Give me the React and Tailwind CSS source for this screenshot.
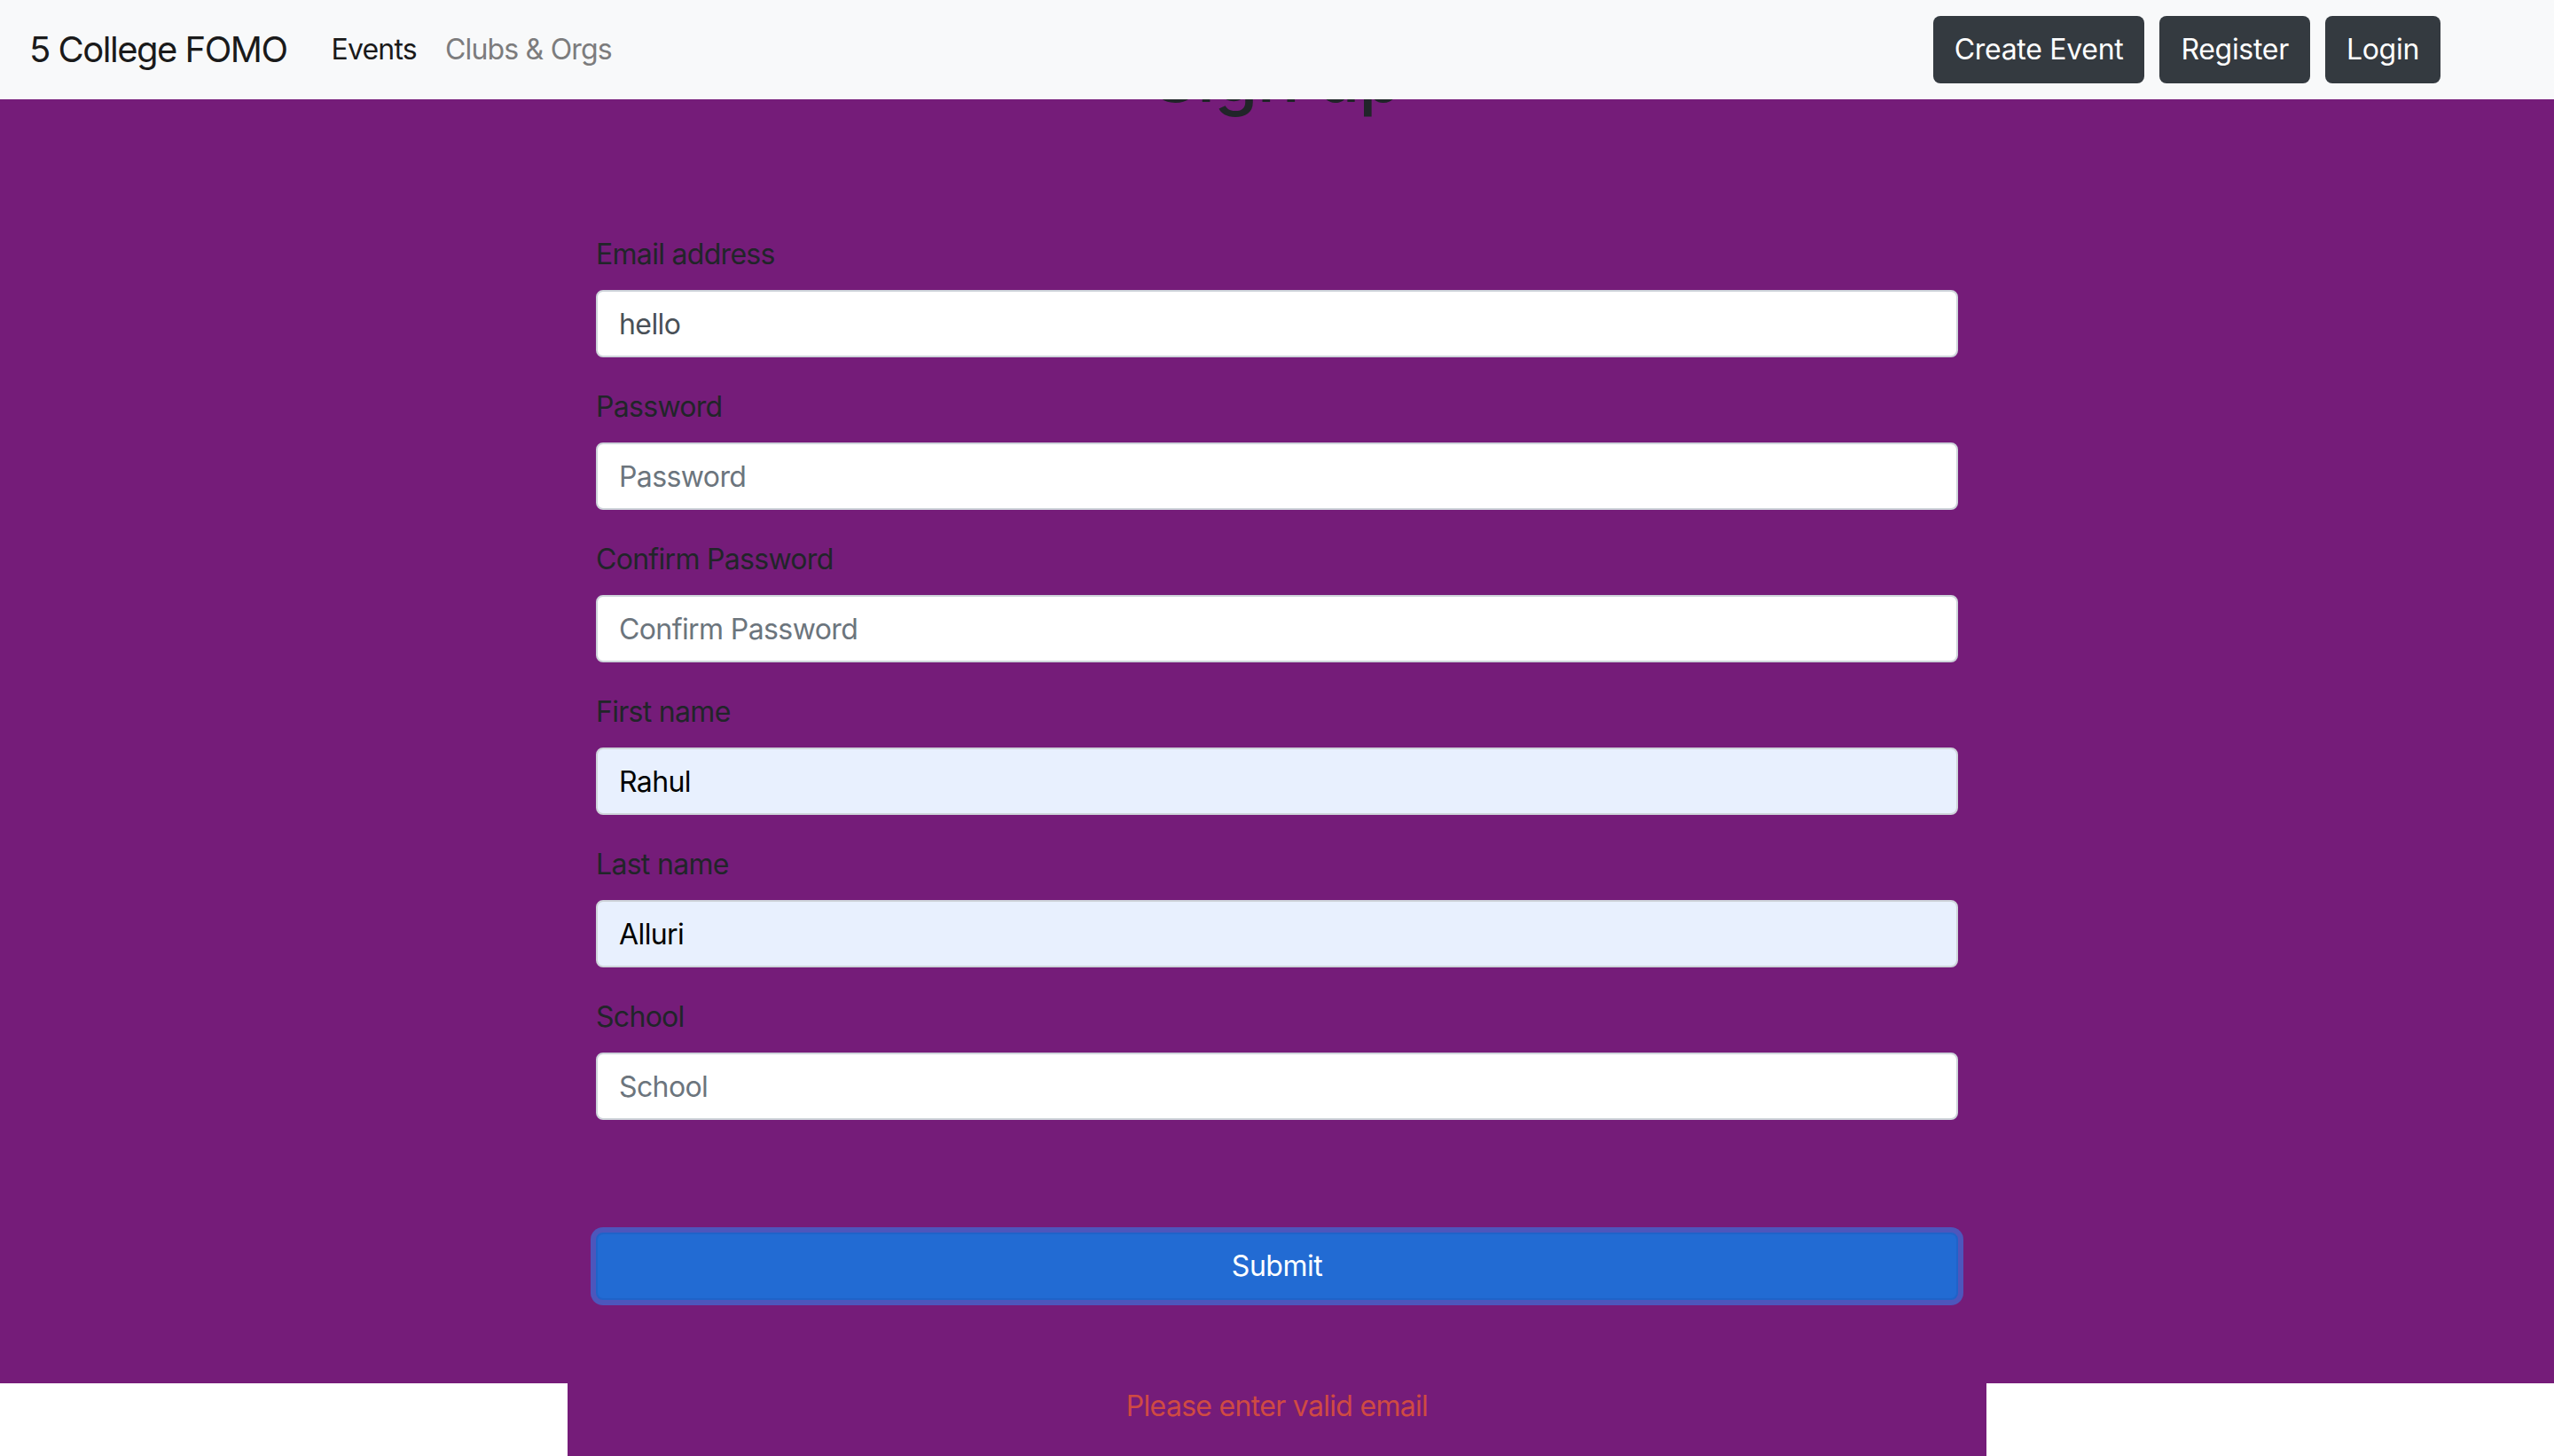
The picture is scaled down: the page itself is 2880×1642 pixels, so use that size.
import React from "react";

const fields = [
  { label: "Email address", value: "hello", placeholder: "Enter email", autofill: false },
  { label: "Password", value: "", placeholder: "Password", autofill: false },
  { label: "Confirm Password", value: "", placeholder: "Confirm Password", autofill: false },
  { label: "First name", value: "Rahul", placeholder: "First name", autofill: true },
  { label: "Last name", value: "Alluri", placeholder: "Last name", autofill: true },
  { label: "School", value: "", placeholder: "School", autofill: false },
];

function Field({ label, value, placeholder, autofill }) {
  return (
    <div className="mb-[32px]">
      <label className="block mb-[16px] text-[32px] leading-[48px] tracking-[-0.7px] text-[#212529]">{label}</label>
      <input
        readOnly
        defaultValue={value}
        placeholder={placeholder}
        className={
          "block w-full h-[76px] px-[24px] rounded-[8px] border-2 border-[#ced4da] text-[32px] leading-[48px] tracking-[-0.6px] outline-none placeholder:text-[#6c757d] " +
          (autofill ? "bg-[#e8f0fe] text-black" : "bg-white text-[#495057]")
        }
      />
    </div>
  );
}

export default function App() {
  return (
    <div className="min-h-screen bg-white font-['Inter','Noto_Sans',sans-serif]">
      <nav className="fixed top-0 inset-x-0 z-10 h-[112px] bg-[#f8f9fa] flex items-center pl-[33px] pr-[128px]">
        <span className="text-[40px] leading-[60px] text-[#1a1a1a] mr-[34px] tracking-[-1.5px]">5 College FOMO</span>
        <a className="px-[16px] text-[32px] leading-[48px] text-[#1a1a1a] tracking-[-0.8px]">Events</a>
        <a className="px-[16px] text-[32px] leading-[48px] text-[#7c7c7d] tracking-[-0.8px]">Clubs &amp; Orgs</a>
        <div className="ml-auto flex items-center gap-[17px]">
          <button className="h-[76px] px-[24px] rounded-[8px] bg-[#343a40] text-white text-[32px] tracking-[-0.3px]">Create Event</button>
          <button className="h-[76px] px-[24px] rounded-[8px] bg-[#343a40] text-white text-[32px] tracking-[-0.3px]">Register</button>
          <button className="h-[76px] px-[24px] rounded-[8px] bg-[#343a40] text-white text-[32px] tracking-[-0.3px]">Login</button>
        </div>
      </nav>

      <main>
        <section className="bg-[#751c79] h-[1560px]">
          <div className="w-[1600px] mx-auto pt-[38px] px-[32px]">
            <h1 className="text-center text-[80px] leading-[96px] font-medium tracking-[-1px] text-[#212529]">Sign up</h1>
            <form className="mt-[129px]">
              {fields.map((f) => (
                <Field key={f.label} {...f} />
              ))}
              <button
                type="button"
                className="mt-[95px] w-full h-[76px] rounded-[8px] border-2 border-[#1f63c9] bg-[#226bd3] text-white text-[32px] leading-[48px] tracking-[-0.5px] shadow-[0_0_0_6px_rgba(38,143,255,0.5)]"
              >
                Submit
              </button>
            </form>
          </div>
        </section>
        <div className="w-[1600px] mx-auto bg-[#751c79] h-[82px] text-center">
          <p className="text-[32px] leading-[48px] pt-[2px] tracking-[-0.7px] text-[#cf4a43]">Please enter valid email</p>
        </div>
      </main>
    </div>
  );
}
